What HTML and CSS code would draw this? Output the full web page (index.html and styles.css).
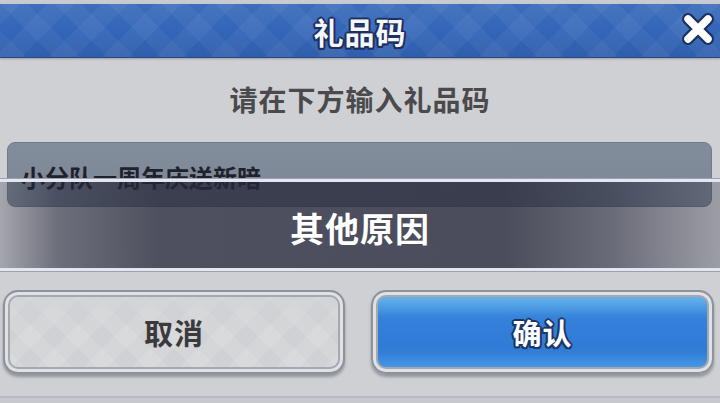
FILE: index.html
```html
<!DOCTYPE html>
<html lang="zh-CN">
<head>
<meta charset="utf-8">
<title>礼品码</title>
<link rel="stylesheet" href="styles.css">
</head>
<body>
<div class="screen">
  <div class="topstrip"></div>
  <header class="titlebar">
    <span></span>
    <h1 class="title">礼品码</h1>
    <button class="close" aria-label="关闭">
      <svg width="36" height="34" viewBox="0 0 36 34">
        <g stroke-linecap="round" fill="none">
          <path d="M8 7 L28 27 M28 7 L8 27" stroke="#1d2f5e" stroke-width="12"/>
          <path d="M8 7 L28 27 M28 7 L8 27" stroke="#ffffff" stroke-width="7.5"/>
        </g>
      </svg>
    </button>
  </header>
  <main class="content">
    <p class="prompt">请在下方输入礼品码</p>
    <div class="input">小分队一周年庆送新暗</div>
    <div class="actions">
      <button class="btn cancel">取消</button>
      <button class="btn confirm">确认</button>
    </div>
    <div class="footline"></div>
  </main>
  <div class="toast">其他原因</div>
</div>
</body>
</html>
```

FILE: styles.css
```css
* { box-sizing: border-box; }
html, body { margin: 0; padding: 0; }
body {
  width: 720px;
  height: 403px;
  overflow: hidden;
  background: #cfd0d4;
  font-family: "Noto Sans CJK SC", "Noto Sans", sans-serif;
}
.screen {
  position: relative;
  width: 720px;
  height: 403px;
  display: flex;
  flex-direction: column;
}
.topstrip {
  height: 4px;
  background: #c8cbd1;
}
.titlebar {
  height: 54px;
  display: grid;
  grid-template-columns: 1fr auto 1fr;
  align-items: center;
  border-bottom: 1px solid #27498a;
  background:
    linear-gradient(180deg, rgba(255,255,255,0.05) 0%, rgba(255,255,255,0) 50%, rgba(0,0,30,0.08) 100%),
    repeating-linear-gradient(45deg, rgba(255,255,255,0.045) 0 19px, rgba(255,255,255,0) 19px 38px),
    repeating-linear-gradient(-45deg, rgba(255,255,255,0.045) 0 19px, rgba(255,255,255,0) 19px 38px);
  background-color: #3366b8;
  box-shadow: 0 1px 2px rgba(0,0,0,0.25);
}
.title {
  margin: 0;
  font-size: 30px;
  font-weight: 700;
  color: #f4f6fa;
  line-height: 40px;
  letter-spacing: 1px;
  text-shadow:
    2px 0 0 #1d2f5e, -2px 0 0 #1d2f5e, 0 2px 0 #1d2f5e, 0 -2px 0 #1d2f5e,
    1.5px 1.5px 0 #1d2f5e, -1.5px 1.5px 0 #1d2f5e, 1.5px -1.5px 0 #1d2f5e, -1.5px -1.5px 0 #1d2f5e;
}
.close {
  justify-self: end;
  margin-right: 4px;
  margin-top: -4px;
  padding: 0;
  border: 0;
  background: none;
  width: 36px;
  height: 34px;
  display: flex;
}
.content {
  flex: 1;
  display: flex;
  flex-direction: column;
}
.prompt {
  margin: 21px 0 0;
  text-align: center;
  font-size: 28px;
  line-height: 40px;
  font-weight: 700;
  color: #4a4a4c;
  letter-spacing: 1px;
}
.input {
  margin: 23px 8px 0 7px;
  height: 65px;
  border-radius: 8px;
  background: linear-gradient(180deg, #828c9b 0%, #7c8796 100%);
  border: 1px solid #6f7a8a;
  display: flex;
  align-items: center;
  padding: 4px 0 0 13px;
  font-size: 24px;
  font-weight: 700;
  color: #1f222b;
}
.actions {
  margin-top: 83px;
  display: grid;
  grid-template-columns: 342px 343px;
  column-gap: 26px;
  padding-left: 3px;
  height: 84px;
}
.btn {
  font-family: inherit;
  font-size: 29px;
  font-weight: 700;
  border-radius: 15px;
  border: 2px solid #8d939c;
  box-shadow:
    0 3px 3px rgba(0,0,0,0.28),
    inset 0 0 0 3px #dfe1e5,
    inset 0 0 0 5px #a4a9b1;
  padding: 0;
  letter-spacing: 1px;
}
.cancel {
  color: #3a3a3c;
  background:
    linear-gradient(180deg, rgba(210,211,214,0.7) 0%, rgba(210,211,214,0) 45%),
    repeating-linear-gradient(45deg, rgba(255,255,255,0.1) 0 17px, rgba(255,255,255,0) 17px 34px),
    repeating-linear-gradient(-45deg, rgba(255,255,255,0.1) 0 17px, rgba(255,255,255,0) 17px 34px);
  background-color: #d0d1d4;
}
.confirm {
  color: #ffffff;
  background:
    linear-gradient(180deg, rgba(140,210,245,0.55) 0%, rgba(140,210,245,0.15) 22%, rgba(255,255,255,0) 30%, rgba(255,255,255,0) 75%, rgba(120,200,245,0.25) 100%),
    linear-gradient(180deg, #4b9fe3 0%, #3480da 35%, #2f7bd6 70%, #3d8ee0 100%);
  text-shadow:
    2px 0 0 #1d3566, -2px 0 0 #1d3566, 0 2px 0 #1d3566, 0 -2px 0 #1d3566,
    1.5px 1.5px 0 #1d3566, -1.5px 1.5px 0 #1d3566, 1.5px -1.5px 0 #1d3566, -1.5px -1.5px 0 #1d3566;
}
.footline {
  margin-top: 22px;
  height: 2px;
  background: #b6bac2;
}
.content::after {
  content: "";
  flex: 1;
  background: #c6c8cd;
}
.toast {
  position: absolute;
  left: 0;
  right: 0;
  top: 179px;
  height: 92px;
  display: flex;
  align-items: center;
  justify-content: center;
  padding-top: 4px;
  font-size: 34px;
  font-weight: 700;
  color: #ffffff;
  letter-spacing: 1px;
  border-top: 3px solid #e3e6f2;
  border-bottom: 3px solid #e3e6f2;
  box-shadow: 0 -1px 0 #9ea2ab, 0 1px 0 #9ea2ab;
  background: linear-gradient(90deg,
    rgba(38,40,58,0.25) 0%,
    rgba(38,40,58,0.58) 8%,
    rgba(38,40,58,0.76) 22%,
    rgba(38,40,58,0.78) 70%,
    rgba(38,40,58,0.6) 85%,
    rgba(38,40,58,0.3) 100%);
}
```
